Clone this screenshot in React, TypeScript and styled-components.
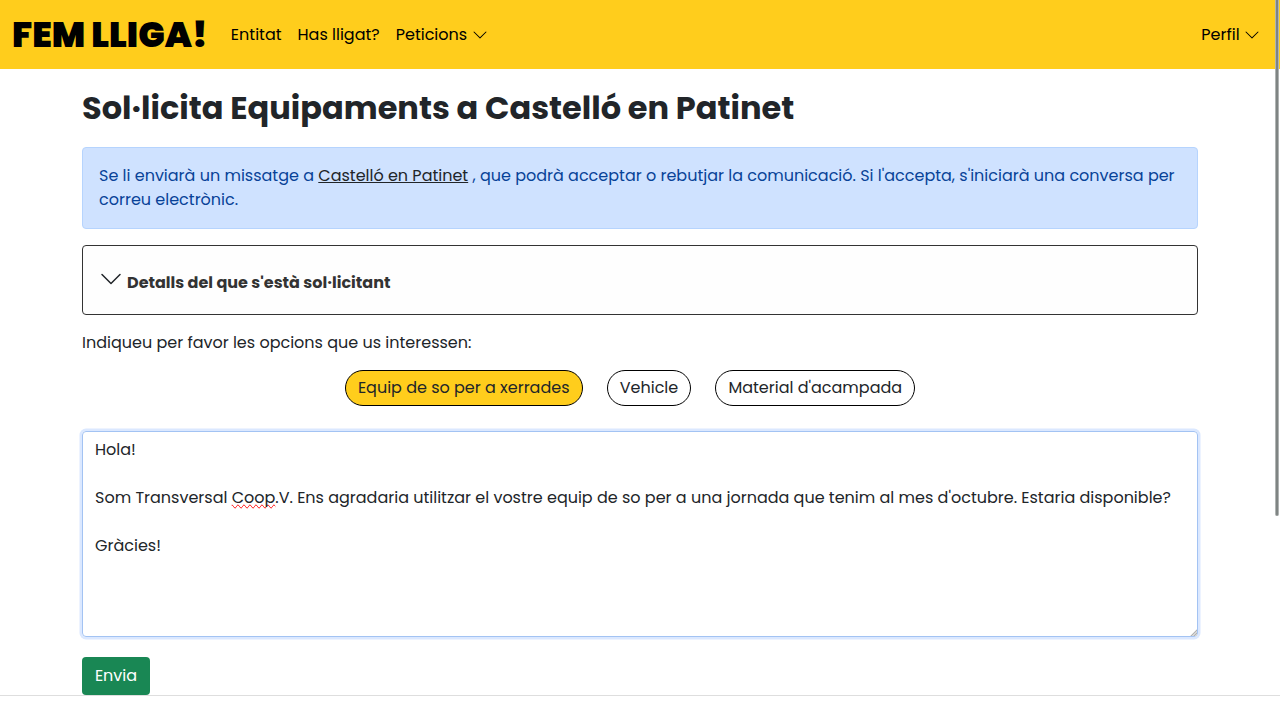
import React from 'react';
import styled, { createGlobalStyle } from 'styled-components';

const GlobalStyle = createGlobalStyle`
  *, *::before, *::after { box-sizing: border-box; }
  html, body { margin: 0; height: 720px; overflow: hidden; background: #fff; }
  body {
    font-family: Poppins, Inter, "Liberation Sans", sans-serif;
    font-size: 16px;
    line-height: 1.5;
    color: #212529;
  }
`;

const Page = styled.div`
  position: relative;
  height: 720px;
  overflow: hidden;
`;

const Navbar = styled.nav`
  display: flex;
  align-items: center;
  height: 69px;
  padding: 0 12px;
  background: #ffcd1c;
  color: #000;
`;

const Brand = styled.a`
  margin-right: 15px;
  font-size: 35.2px;
  font-weight: 900;
  line-height: 53px;
  white-space: nowrap;
`;

const NavGroup = styled.div<{ $end?: boolean }>`
  display: flex;
  ${(p) => p.$end && 'margin-left: auto;'}
`;

const NavLink = styled.a`
  display: flex;
  align-items: center;
  gap: 4.4px;
  padding: 8px;
  white-space: nowrap;
`;

const Icon = styled.svg<{ $size: number }>`
  flex: none;
  width: ${(p) => p.$size}px;
  height: ${(p) => p.$size}px;
  fill: currentColor;
`;

const Container = styled.main`
  width: 1140px;
  margin: 0 auto;
  padding: 20px 12px 0;
`;

const Title = styled.h1`
  margin: 0 0 20px;
  font-size: 32px;
  font-weight: 700;
  line-height: 38px;
`;

const Notice = styled.div`
  height: 82px;
  margin-bottom: 16px;
  padding: 16px;
  border: 1px solid #b6d4fe;
  border-radius: 4px;
  background: #cfe2ff;
  color: #084298;
`;

const EntityLink = styled.a`
  color: #212529;
  text-decoration: underline;
`;

const Details = styled.section`
  display: flex;
  gap: 4px;
  height: 70px;
  margin-bottom: 16px;
  padding: 21px 16px 0;
  border: 1px solid #333;
  border-radius: 4px;
  background: #fefefe;
`;

const DetailsTitle = styled.strong`
  padding-top: 4px;
  font-weight: 700;
  color: #333;
`;

const Prompt = styled.p`
  margin: 0 0 15px;
`;

const Options = styled.div`
  display: flex;
  justify-content: center;
  gap: 24.2px;
  margin: 0 20px 25px 0;
`;

const Option = styled.button<{ $active?: boolean }>`
  height: 36px;
  padding: 0 12px;
  border: 1px solid #000;
  border-radius: 18px;
  background: ${(p) => (p.$active ? '#ffcd1c' : '#fff')};
  color: #212529;
  font: inherit;
  line-height: 34px;
`;

const Message = styled.div`
  position: relative;
  height: 206px;
  margin-bottom: 20px;
  padding: 6px 12px;
  border: 1px solid #a3c3f3;
  border-radius: 4px;
  box-shadow: 0 0 0 2.5px #dbe8ff;
  white-space: pre-wrap;
`;

const ResizeGrip = styled.svg`
  position: absolute;
  right: 0;
  bottom: 0;
  width: 7px;
  height: 7px;
`;

const Misspelled = styled.span`
  text-decoration-line: spelling-error;
`;

const Submit = styled.button`
  display: block;
  width: 68px;
  height: 38px;
  padding: 0;
  border: 0;
  border-radius: 4px;
  background: #198754;
  color: #fff;
  font: inherit;
`;

const Footer = styled.footer`
  border-top: 1px solid #dedede;
`;

const ScrollThumb = styled.div`
  position: absolute;
  top: 0;
  right: 1px;
  width: 4px;
  height: 516px;
  border: solid #b0b4b3;
  border-width: 0 1px;
  border-radius: 0 0 2px 2px;
  background: #7f8483;
`;

const Chevron = ({ size = 16 }: { size?: number }) => (
  <Icon $size={size} viewBox="0 0 16 16" aria-hidden="true">
    <path
      fillRule="evenodd"
      d="M1.646 4.646a.5.5 0 0 1 .708 0L8 10.293l5.646-5.647a.5.5 0 0 1 .708.708l-6 6a.5.5 0 0 1-.708 0l-6-6a.5.5 0 0 1 0-.708z"
    />
  </Icon>
);

export default function App() {
  return (
    <Page>
      <GlobalStyle />
      <Navbar>
        <Brand>FEM LLIGA!</Brand>
        <NavGroup>
          <NavLink>Entitat</NavLink>
          <NavLink>Has lligat?</NavLink>
          <NavLink>Peticions<Chevron /></NavLink>
        </NavGroup>
        <NavGroup $end>
          <NavLink>Perfil<Chevron /></NavLink>
        </NavGroup>
      </Navbar>
      <Container>
        <Title>Sol·licita Equipaments a Castelló en Patinet</Title>
        <Notice>
          Se li enviarà un missatge a <EntityLink>Castelló en Patinet</EntityLink>
          {" , que podrà acceptar o rebutjar la comunicació. Si l'accepta, s'iniciarà una conversa per correu electrònic."}
        </Notice>
        <Details>
          <Chevron size={24} />
          <DetailsTitle>Detalls del que s'està sol·licitant</DetailsTitle>
        </Details>
        <Prompt>Indiqueu per favor les opcions que us interessen:</Prompt>
        <Options>
          <Option $active>Equip de so per a xerrades</Option>
          <Option>Vehicle</Option>
          <Option>Material d'acampada</Option>
        </Options>
        <Message>
          {'Hola!\n\nSom Transversal '}
          <Misspelled>Coop</Misspelled>
          {".V. Ens agradaria utilitzar el vostre equip de so per a una jornada que tenim al mes d'octubre. Estaria disponible?\n\nGràcies!"}
          <ResizeGrip viewBox="0 0 7 7" aria-hidden="true">
            <path d="M0 7 7 0V7Z" fill="#d6d6d6" />
            <path d="M1 7 7 1M4 7 7 4" stroke="#a8a8a8" strokeWidth="0.8" />
          </ResizeGrip>
        </Message>
        <Submit>Envia</Submit>
      </Container>
      <Footer />
      <ScrollThumb />
    </Page>
  );
}
